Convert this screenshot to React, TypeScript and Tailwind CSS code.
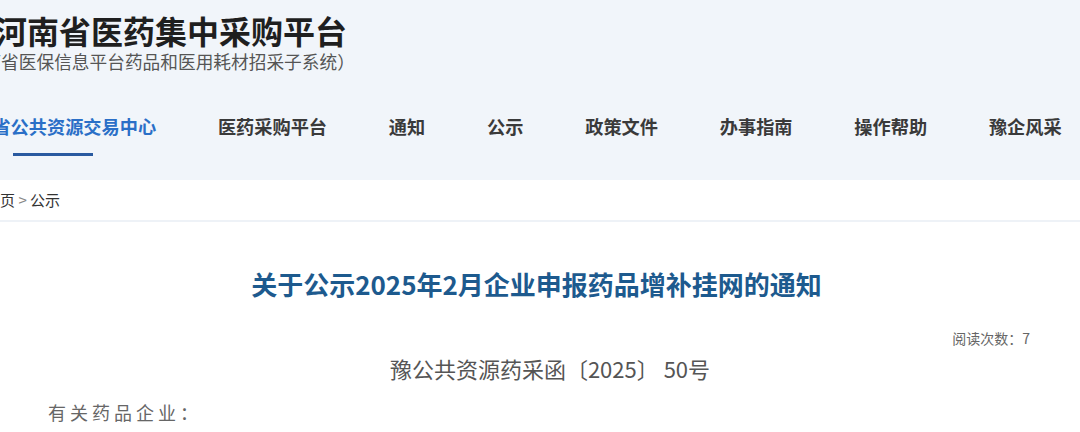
const navItems = [
  "河南省公共资源交易中心",
  "医药采购平台",
  "通知",
  "公示",
  "政策文件",
  "办事指南",
  "操作帮助",
  "豫企风采",
];

export default function App() {
  return (
    <div
      className="w-[1080px] h-[432px] overflow-hidden bg-white"
      style={{ fontFamily: '"Noto Sans CJK SC", "Noto Sans", sans-serif' }}
    >
      {/* header */}
      <header className="h-[180px] bg-[#f1f5fa] overflow-hidden">
        <div className="pt-[10px]">
          <h1 className="ml-[-5px] text-[32px] leading-[40px] font-bold text-[#1f1f1f] whitespace-nowrap">
            河南省医药集中采购平台
          </h1>
          <p className="ml-[-52px] text-[17.7px] leading-[22px] text-[#555] whitespace-nowrap">
            （河南省医保信息平台药品和医用耗材招采子系统）
          </p>
        </div>

        <nav className="mt-[41px] ml-[-44px] flex gap-[61.8px] whitespace-nowrap">
          {navItems.map((item, i) => (
            <div key={item} className="flex flex-col">
              <span
                className={
                  "text-[18.2px] leading-[26px] font-bold " +
                  (i === 0 ? "text-[#2a6fc7]" : "text-[#3a3a3a]")
                }
              >
                {item}
              </span>
              {i === 0 && (
                <span className="mt-[14px] ml-[57px] h-[3px] w-[80px] bg-[#2a5aa0]" />
              )}
            </div>
          ))}
        </nav>
      </header>

      {/* breadcrumb */}
      <div className="h-[42px] border-b-2 border-[#eef2f7] flex items-center">
        <div className="ml-[-15px] text-[15px] text-[#333] whitespace-nowrap">
          首页 <span className="text-[#888]">&gt;</span> 公示
        </div>
      </div>

      {/* article */}
      <main>
        <h2 className="mt-[44px] pr-[7px] text-center text-[26px] leading-[36px] font-bold text-[#1d5a8e]">
          关于公示2025年2月企业申报药品增补挂网的通知
        </h2>
        <div className="mt-[26px] pr-[50px] text-right text-[14px] leading-[20px] text-[#666]">
          阅读次数：7
        </div>
        <div className="mt-[5px] pl-[20px] text-center text-[22px] leading-[30px] text-[#555]">
          豫公共资源药采函〔2025〕 50号
        </div>
        <p className="mt-[16px] pl-[48px] text-[18px] leading-[26px] tracking-[4px] text-[#666]">
          有关药品企业：
        </p>
      </main>
    </div>
  );
}
